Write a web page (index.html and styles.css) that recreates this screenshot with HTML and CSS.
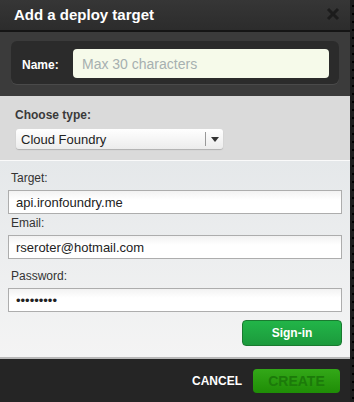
FILE: index.html
```html
<!DOCTYPE html>
<html lang="en">
  <head>
    <meta charset="UTF-8" />
    <meta name="viewport" content="width=device-width, initial-scale=1.0" />
    <title>Add a deploy target</title>
    <link rel="stylesheet" href="styles.css">
  </head>
  <body>
    <div class="dialog">
      <div class="header">
        <h1>Add a deploy target</h1>
        <svg class="close" width="14" height="14" viewBox="0 0 14 14">
          <path d="M2 2 L12 12 M12 2 L2 12" stroke="#1c1c1c" stroke-width="3" />
        </svg>
      </div>

      <div class="name-area">
        <div class="name-box">
          <label for="name">Name:</label>
          <input type="text" id="name" placeholder="Max 30 characters" />
        </div>
      </div>

      <div class="type-area">
        <div class="type-label">Choose type:</div>
        <div class="select">
          <span class="select-text">Cloud Foundry</span>
          <span class="select-arrow"></span>
        </div>
      </div>

      <div class="form-area">
        <label class="field-label">Target:</label>
        <input type="text" class="field" value="api.ironfoundry.me" />
        <label class="field-label">Email:</label>
        <input type="text" class="field" value="rseroter@hotmail.com" />
        <label class="field-label pw-label">Password:</label>
        <input type="password" class="field" value="123456789" />
        <div class="signin-row">
          <button class="signin">Sign-in</button>
        </div>
      </div>

      <div class="footer">
        <span class="cancel">CANCEL</span>
        <button class="create">CREATE</button>
      </div>
    </div>
  </body>
</html>
```

FILE: styles.css
```css
body {
  margin: 0;
  background-color: #1e1e1e;
  background-image: radial-gradient(circle, #000 1px, transparent 1.5px);
  background-size: 4px 8px;
  background-position: 351px 2px;
  font-family: "Liberation Sans", Arial, sans-serif;
  width: 354px;
  height: 402px;
  overflow: hidden;
}
.dialog {
  width: 350px;
  height: 402px;
  display: flex;
  flex-direction: column;
}
.header {
  height: 30px;
  background: linear-gradient(#363636, #2c2c2c);
  border-bottom: 2px solid #151515;
  display: flex;
  align-items: center;
  justify-content: space-between;
  padding: 0 10px 0 14px;
}
.header h1 {
  margin: 0;
  color: #fff;
  font-size: 15px;
  font-weight: bold;
  padding-bottom: 2px;
}
.close {
  margin-top: -2px;
}
.name-area {
  height: 64px;
  background-color: #3b3b3b;
  padding: 9px 11px 0 11px;
  box-sizing: border-box;
}
.name-box {
  height: 43px;
  background-color: #2b2b2b;
  border-radius: 6px;
  display: flex;
  align-items: center;
  padding: 0 10px 0 11px;
  box-shadow: 0 1px 0 #4a4a4a;
}
.name-box label {
  color: #fff;
  font-size: 12px;
  font-weight: bold;
  width: 51px;
  padding-top: 4px;
}
.name-box input {
  flex: 1;
  height: 29px;
  box-sizing: border-box;
  border: none;
  border-radius: 4px;
  background-color: #f6faea;
  padding: 0 9px;
  font-family: "Liberation Sans", Arial, sans-serif;
  font-size: 14px;
  margin-top: 2px;
}
.name-box input::placeholder {
  color: #a6b0b0;
}
.type-area {
  height: 65px;
  background-color: #dadada;
  border-bottom: 1px solid #fafafa;
  padding: 12px 0 0 15px;
  box-sizing: border-box;
}
.type-label {
  color: #3a3a3a;
  font-size: 12px;
  font-weight: bold;
}
.select {
  width: 207px;
  height: 20px;
  margin-top: 7px;
  margin-left: 1px;
  background: linear-gradient(#ffffff, #ececec);
  border-radius: 3px;
  box-shadow: 0 1px 1px #b0b0b0;
  display: flex;
  align-items: center;
  justify-content: space-between;
}
.select-text {
  font-size: 13px;
  color: #222;
  padding-left: 5px;
}
.select-arrow {
  width: 17px;
  height: 14px;
  border-left: 1px solid #999;
  position: relative;
}
.select-arrow::after {
  content: "";
  position: absolute;
  left: 5px;
  top: 5px;
  border-left: 4px solid transparent;
  border-right: 4px solid transparent;
  border-top: 5px solid #333;
}
.form-area {
  flex: 1;
  background: linear-gradient(#e5e8ea, #f4f4f4);
  border-bottom: 2px solid #b8b8b8;
  padding: 10px 8px 0 8px;
  display: flex;
  flex-direction: column;
}
.field-label {
  font-size: 12px;
  color: #333;
  padding-left: 3px;
  height: 19px;
}
.pw-label {
  margin-top: 8px;
}
.field {
  height: 24px;
  box-sizing: border-box;
  border: 1px solid #adadad;
  background: linear-gradient(#f2f2f2, #ffffff 40%);
  padding: 0 7px;
  font-family: "Liberation Sans", Arial, sans-serif;
  font-size: 13px;
  color: #222;
  margin-bottom: 2px;
}
.signin-row {
  display: flex;
  justify-content: flex-end;
  margin-top: 6px;
}
.signin {
  width: 100px;
  height: 26px;
  border: 1px solid #1a7a30;
  border-radius: 4px;
  background: linear-gradient(#22b548, #1c9a3c);
  color: #fff;
  font-family: "Liberation Sans", Arial, sans-serif;
  font-size: 12px;
  font-weight: bold;
}
.footer {
  height: 43px;
  background-color: #252525;
  display: flex;
  align-items: center;
  justify-content: flex-end;
  padding: 0 10px 0 0;
}
.cancel {
  color: #fff;
  font-size: 12px;
  font-weight: bold;
  margin-right: 11px;
}
.create {
  width: 87px;
  height: 24px;
  border: none;
  border-radius: 4px;
  background: linear-gradient(#33a818, #1f8d06);
  color: #1c7a0a;
  font-family: "Liberation Sans", Arial, sans-serif;
  font-size: 14px;
  font-weight: bold;
}
```
